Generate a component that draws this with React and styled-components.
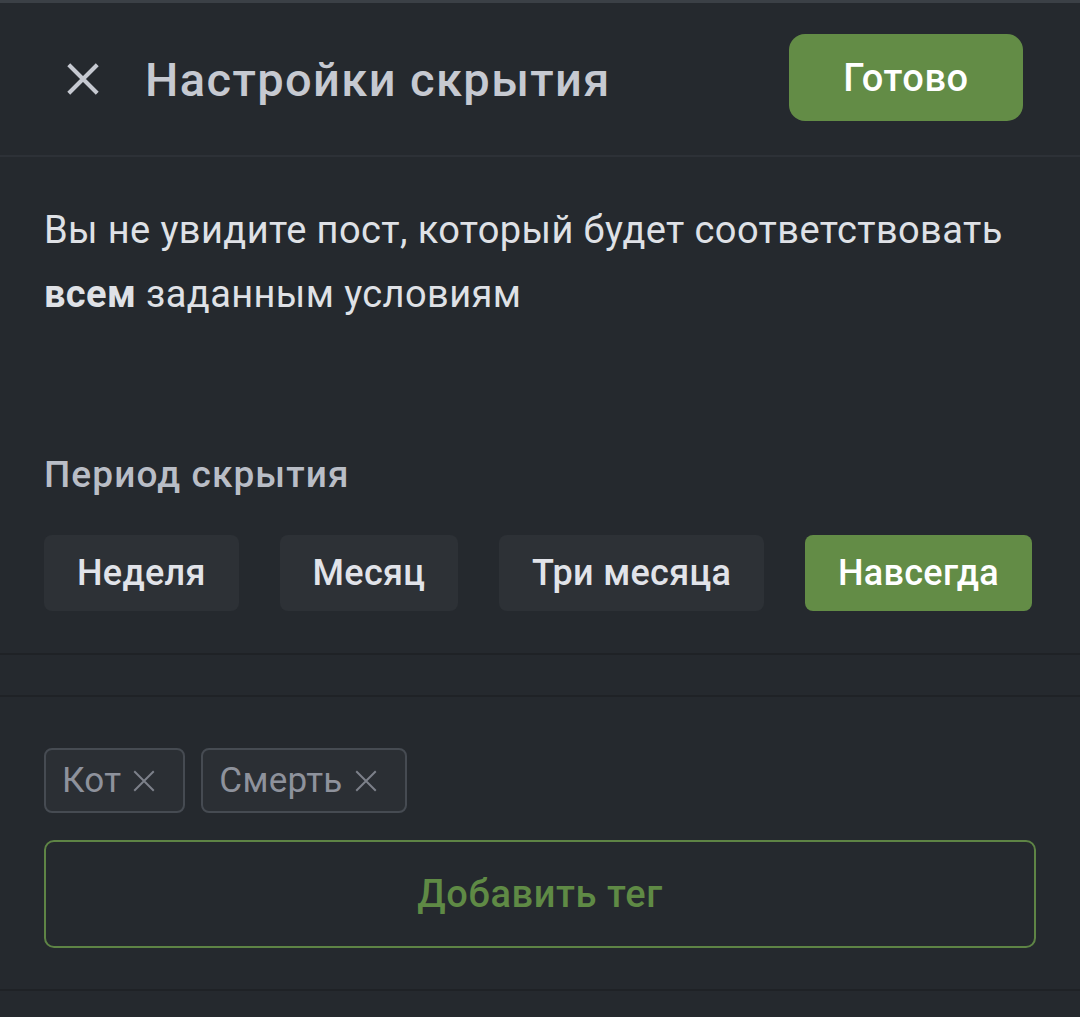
import styled, { createGlobalStyle } from 'styled-components';

const Global = createGlobalStyle`
    html, body {
        margin: 0;
        padding: 0;
        background: #25292e;
    }
    body {
        font-family: Roboto, "Liberation Sans", sans-serif;
    }
    * {
        box-sizing: border-box;
    }
`;

const Screen = styled.div`
    width: 1080px;
    height: 1017px;
    background: #25292e;
    border-top: 3px solid #3b4046;
    overflow: hidden;
`;

const Header = styled.header`
    height: 154px;
    display: flex;
    align-items: center;
    padding: 0 57px 0 64px;
    border-bottom: 2px solid #2d3137;
`;

const CloseButton = styled.button`
    width: 38px;
    height: 38px;
    padding: 0;
    border: none;
    background: none;
    display: flex;
    align-items: center;
    justify-content: center;
    margin-right: 43px;

    svg {
        display: block;
    }
`;

const Title = styled.h1`
    flex: 1;
    margin: 0;
    font-size: 47px;
    font-weight: 500;
    color: #c6c9d1;
    letter-spacing: 1.4px;
`;

const DoneButton = styled.button`
    width: 234px;
    height: 87px;
    border: none;
    border-radius: 16px;
    background: #638c46;
    color: #ffffff;
    font-family: Roboto, "Liberation Sans", sans-serif;
    font-size: 38px;
    font-weight: 500;
    letter-spacing: 0.6px;
    margin-top: -3px;
`;

const Body = styled.section`
    padding: 41px 48px 0 44px;
`;

const Intro = styled.p`
    margin: 0;
    font-size: 38px;
    line-height: 64px;
    color: #dfe1e6;
    letter-spacing: 0.4px;

    b {
        font-weight: 700;
    }
`;

const SectionLabel = styled.h2`
    margin: 127px 0 0;
    font-size: 37px;
    font-weight: 500;
    color: #b9bdc6;
    line-height: 44px;
    letter-spacing: 1.1px;
`;

const Periods = styled.div`
    display: flex;
    justify-content: space-between;
    margin-top: 38px;
    padding-bottom: 42px;
`;

const Period = styled.button`
    height: 76px;
    padding: 0 33px;
    border: none;
    border-radius: 8px;
    background: ${(p) => (p.$active ? '#638c46' : '#2d3136')};
    color: ${(p) => (p.$active ? '#ffffff' : '#e1e3e9')};
    font-family: Roboto, "Liberation Sans", sans-serif;
    font-size: 36px;
    font-weight: 500;
    letter-spacing: 0.3px;
    white-space: nowrap;
`;

const Gap = styled.div`
    height: 44px;
    border-top: 2px solid #1f2226;
    border-bottom: 2px solid #1f2226;
`;

const TagsBlock = styled.section`
    padding: 51px 44px 41px;
    border-bottom: 2px solid #1f2226;
`;

const Tags = styled.div`
    display: flex;
    gap: 16px;
`;

const Tag = styled.span`
    height: 65px;
    display: inline-flex;
    align-items: center;
    gap: 10px;
    padding: 0 26px 0 16px;
    border: 2px solid #464b52;
    border-radius: 8px;
    background: #2b2f34;
    color: #8e929c;
    font-size: 35px;
    letter-spacing: 0.3px;
`;

const AddTag = styled.button`
    display: block;
    width: 992px;
    height: 108px;
    margin-top: 27px;
    border: 2px solid #5e8445;
    border-radius: 10px;
    background: transparent;
    color: #5f8a45;
    font-family: Roboto, "Liberation Sans", sans-serif;
    font-size: 38px;
    font-weight: 500;
    letter-spacing: 0.6px;
`;

const Cross = ({ size, color, width }) => (
    <svg width={size} height={size} viewBox="0 0 24 24" fill="none">
        <path d="M3 3 L21 21 M21 3 L3 21" stroke={color} strokeWidth={width} strokeLinecap="butt" />
    </svg>
);

const periods = ['Неделя', 'Месяц', 'Три месяца', 'Навсегда'];
const tags = ['Кот', 'Смерть'];

const App = () => {
    return (
        <Screen>
            <Global />
            <Header>
                <CloseButton aria-label="Закрыть">
                    <Cross size={40} color="#c6c9d1" width={2.6} />
                </CloseButton>
                <Title>Настройки скрытия</Title>
                <DoneButton>Готово</DoneButton>
            </Header>
            <Body>
                <Intro>
                    Вы не увидите пост, который будет соответствовать <b>всем</b> заданным условиям
                </Intro>
                <SectionLabel>Период скрытия</SectionLabel>
                <Periods>
                    {periods.map((p) => (
                        <Period key={p} $active={p === 'Навсегда'}>
                            {p}
                        </Period>
                    ))}
                </Periods>
            </Body>
            <Gap />
            <TagsBlock>
                <Tags>
                    {tags.map((t) => (
                        <Tag key={t}>
                            {t}
                            <Cross size={26} color="#7d818a" width={1.8} />
                        </Tag>
                    ))}
                </Tags>
                <AddTag>Добавить тег</AddTag>
            </TagsBlock>
        </Screen>
    );
};

export default App;
